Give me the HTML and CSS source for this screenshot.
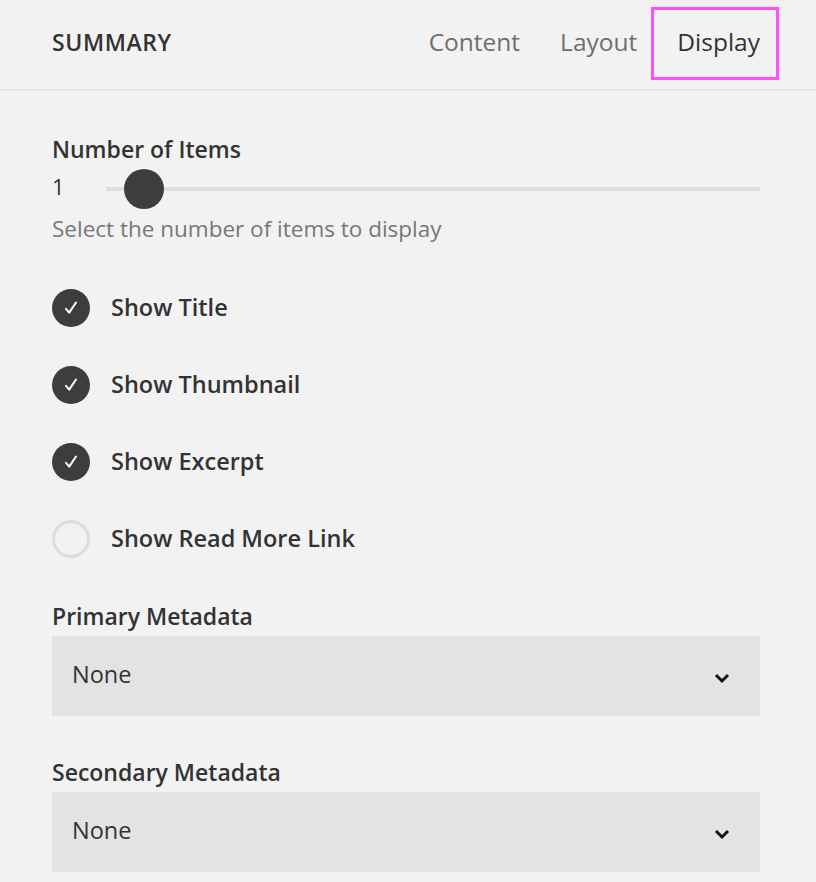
FILE: index.html
```html
<!DOCTYPE html>
<html>
<head>
<meta charset="utf-8">
<link rel="stylesheet" href="styles.css">
</head>
<body>
<div class="panel">
  <header class="header">
    <div class="title">SUMMARY</div>
    <nav class="tabs">
      <span class="tab">Content</span>
      <span class="tab">Layout</span>
      <span class="tab tab-active">Display</span>
    </nav>
  </header>
  <main class="body">
    <section class="field">
      <div class="label">Number of Items</div>
      <div class="slider-row">
        <span class="slider-value">1</span>
        <div class="slider-track"><span class="slider-thumb"></span></div>
      </div>
      <div class="help">Select the number of items to display</div>
    </section>
    <section class="checks">
      <div class="check-row"><span class="check checked"><svg viewBox="0 0 38 38" width="38" height="38"><path d="M14 19.8 L17.2 23.6 L24 13.5" fill="none" stroke="#fff" stroke-width="2" stroke-linecap="round" stroke-linejoin="round"/></svg></span><span class="check-label">Show Title</span></div>
      <div class="check-row"><span class="check checked"><svg viewBox="0 0 38 38" width="38" height="38"><path d="M14 19.8 L17.2 23.6 L24 13.5" fill="none" stroke="#fff" stroke-width="2" stroke-linecap="round" stroke-linejoin="round"/></svg></span><span class="check-label">Show Thumbnail</span></div>
      <div class="check-row"><span class="check checked"><svg viewBox="0 0 38 38" width="38" height="38"><path d="M14 19.8 L17.2 23.6 L24 13.5" fill="none" stroke="#fff" stroke-width="2" stroke-linecap="round" stroke-linejoin="round"/></svg></span><span class="check-label">Show Excerpt</span></div>
      <div class="check-row"><span class="check"></span><span class="check-label">Show Read More Link</span></div>
    </section>
    <section class="select-field">
      <div class="label">Primary Metadata</div>
      <div class="select"><span>None</span><svg class="chev" viewBox="0 0 16 11" width="16" height="11"><path d="M2 2 L8 8 L14 2" fill="none" stroke="#111" stroke-width="3"/></svg></div>
    </section>
    <section class="select-field second">
      <div class="label">Secondary Metadata</div>
      <div class="select"><span>None</span><svg class="chev" viewBox="0 0 16 11" width="16" height="11"><path d="M2 2 L8 8 L14 2" fill="none" stroke="#111" stroke-width="3"/></svg></div>
    </section>
  </main>
</div>
</body>
</html>
```
FILE: styles.css
```css
html, body {
  margin: 0;
  padding: 0;
  background: #f2f2f2;
}
body {
  font-family: "Open Sans", "Liberation Sans", sans-serif;
  color: #333;
}
.panel {
  width: 816px;
  height: 882px;
  overflow: hidden;
}
.header {
  height: 89px;
  display: flex;
  align-items: center;
  justify-content: space-between;
  padding: 0 56px 0 52px;
  border-bottom: 2px solid #e3e3e3;
}
.title {
  font-size: 23px;
  font-weight: 600;
  line-height: 32px;
  letter-spacing: 0.6px;
  color: #333;
  margin-top: -6px;
}
.tabs {
  display: flex;
  gap: 40px;
  margin-top: -6px;
}
.tab {
  font-size: 24.5px;
  line-height: 32px;
  color: #6e6e6e;
}
.tab-active {
  color: #333;
  position: relative;
}
.tab-active::after {
  content: "";
  position: absolute;
  left: -26px;
  right: -19px;
  top: -19px;
  bottom: -22px;
  border: 3px solid #ff4ff5;
}
.body {
  padding: 0 56px 0 52px;
}
.label {
  font-size: 23px;
  font-weight: 600;
  color: #333;
  line-height: 30px;
}
.field .label {
  margin-top: 43px;
}
.slider-row {
  display: flex;
  align-items: center;
  height: 40px;
  margin-top: 4px;
}
.slider-value {
  width: 54px;
  font-size: 22px;
  color: #333;
  margin-top: -4px;
}
.slider-track {
  flex: 1;
  height: 4px;
  background: #dedede;
  position: relative;
  margin-top: 2px;
}
.slider-thumb {
  position: absolute;
  left: 18px;
  top: -18px;
  width: 40px;
  height: 40px;
  border-radius: 50%;
  background: #3d3d3d;
}
.help {
  font-size: 22.5px;
  line-height: 26px;
  color: #777;
  margin-top: 8px;
}
.checks {
  margin-top: 47px;
  display: flex;
  flex-direction: column;
  gap: 39px;
}
.check-row {
  display: flex;
  align-items: center;
  height: 38px;
}
.check {
  width: 38px;
  height: 38px;
  border-radius: 50%;
  box-sizing: border-box;
  border: 3px solid #dcdcdc;
  margin-right: 21px;
  flex: none;
  display: flex;
}
.check.checked {
  background: #3d3d3d;
  border: none;
}
.check-label {
  font-size: 23.5px;
  font-weight: 600;
  line-height: 32px;
  color: #333;
  margin-top: -3px;
}
.select-field {
  margin-top: 43px;
}
.select-field.second {
  margin-top: 41px;
}
.select {
  margin-top: 5px;
  height: 80px;
  background: #e3e3e3;
  display: flex;
  align-items: center;
  justify-content: space-between;
  padding: 0 30px 0 20px;
  font-size: 23.5px;
  color: #333;
}
.select span {
  margin-top: -4px;
}
.chev {
  margin-top: 4px;
}
```
